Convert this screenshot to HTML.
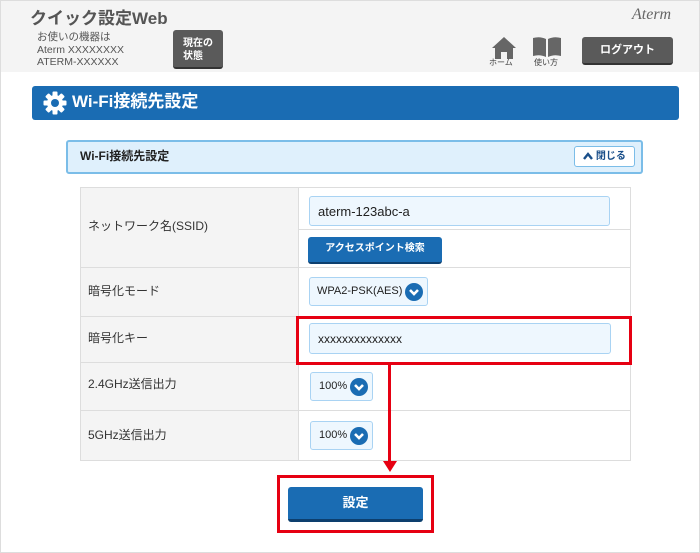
<!DOCTYPE html>
<html><head><meta charset="utf-8"><style>
*{box-sizing:border-box;margin:0;padding:0}
body{width:700px;height:553px;position:relative;background:#fff;font-family:"Liberation Sans","Noto Sans CJK JP",sans-serif;overflow:hidden;line-height:1}
.a{position:absolute}
.hdr{left:0;top:0;width:700px;height:72px;background:#f4f4f4}
.sel{position:absolute;background:#eef7fe;border:1px solid #a9d3f3;border-radius:3px;font-size:12px;color:#222;padding-left:8px;display:flex;align-items:center}
.chev{position:absolute;right:4px;top:50%;margin-top:-9px;width:18px;height:18px}
.lbl{position:absolute;left:88px;font-size:12px;color:#333}
.hl{position:absolute;left:80px;width:550px;height:1px;background:#ddd}
</style></head><body>
<div class="a hdr"></div>
<div class="a" style="left:0;top:0;width:700px;height:553px;border:1px solid #ddd;z-index:5"></div>
<div class="a" style="left:30px;top:10px;font-size:17px;font-weight:bold;color:#555">クイック設定Web</div>
<div class="a" style="left:37px;top:31px;font-size:10.5px;color:#555;line-height:12.5px">お使いの機器は<br>Aterm XXXXXXXX<br>ATERM-XXXXXX</div>
<div class="a" style="left:173px;top:30px;width:50px;height:39px;background:#5a5a5a;border-radius:3px;border-bottom:2px solid #333;color:#fff;font-size:10px;font-weight:bold;padding:7px 0 0 10px;line-height:13px">現在の<br>状態</div>
<div class="a" style="left:632px;top:7px;font-size:16px;font-style:italic;color:#666;font-family:'Liberation Serif',serif">Aterm</div>
<svg class="a" style="left:490px;top:36px" width="28" height="24" viewBox="0 0 28 24"><path d="M14 1 L2 12 H5 V23 H11 V16 H17 V23 H23 V12 H26 Z" fill="#666"/></svg>
<div class="a" style="left:489px;top:59px;font-size:8px;color:#444">ホーム</div>
<svg class="a" style="left:532px;top:36px" width="30" height="22" viewBox="0 0 30 22"><path d="M1 2 Q8 0 14 3 V21 Q8 18 1 20 Z M16 3 Q22 0 29 2 V20 Q22 18 16 21 Z" fill="#666"/></svg>
<div class="a" style="left:534px;top:59px;font-size:8px;color:#444">使い方</div>
<div class="a" style="left:582px;top:37px;width:91px;height:28px;background:#5a5a5a;border-radius:3px;border-bottom:2px solid #333;color:#fff;font-size:11px;font-weight:bold;text-align:center;line-height:26px">ログアウト</div>
<div class="a" style="left:32px;top:86px;width:647px;height:34px;background:#1a6cb3;border-radius:3px"></div>
<svg class="a" style="left:43px;top:91px" width="24" height="24" viewBox="0 0 24 24"><g fill="#fff"><circle cx="12" cy="12" r="8"/><g id="t"><rect x="9.5" y="0.5" width="5" height="23" rx="1"/></g><use href="#t" transform="rotate(45 12 12)"/><use href="#t" transform="rotate(90 12 12)"/><use href="#t" transform="rotate(135 12 12)"/></g><circle cx="12" cy="12" r="4" fill="#1a6cb3"/></svg>
<div class="a" style="left:72px;top:93px;font-size:17px;font-weight:bold;color:#fff">Wi-Fi接続先設定</div>
<div class="a" style="left:66px;top:140px;width:577px;height:34px;background:#dff0fc;border:2px solid #7bbde8;border-radius:3px"></div>
<div class="a" style="left:80px;top:150px;font-size:12px;font-weight:bold;color:#222">Wi-Fi接続先設定</div>
<div class="a" style="left:574px;top:146px;width:61px;height:21px;background:#fff;border:1px solid #7bbde8;border-radius:3px;font-size:10px;font-weight:bold;color:#1a4f8a;line-height:19px;text-align:center"><svg width="10" height="8" viewBox="0 0 10 8" style="vertical-align:-1px"><path d="M1 7 L5 2 L9 7" stroke="#1a4f8a" stroke-width="2.4" fill="none"/></svg> 閉じる</div>
<div class="a" style="left:80px;top:187px;width:551px;height:274px;border:1px solid #ddd;background:#fff"></div>
<div class="a" style="left:81px;top:188px;width:218px;height:272px;background:#f4f4f4;border-right:1px solid #ddd"></div>
<div class="hl" style="top:267px"></div><div class="hl" style="top:316px"></div><div class="hl" style="top:362px"></div><div class="hl" style="top:410px"></div>
<div class="a" style="left:299px;top:229px;width:331px;height:1px;background:#ddd"></div>
<div class="lbl" style="top:220px">ネットワーク名(SSID)</div>
<div class="lbl" style="top:285px">暗号化モード</div>
<div class="lbl" style="top:332px">暗号化キー</div>
<div class="lbl" style="top:378px">2.4GHz送信出力</div>
<div class="lbl" style="top:429px">5GHz送信出力</div>
<div class="sel" style="left:309px;top:196px;width:301px;height:30px;font-size:13px">aterm-123abc-a</div>
<div class="a" style="left:308px;top:237px;width:134px;height:27px;background:#1a6cb3;border-radius:3px;border-bottom:2px solid #0d3f6e;color:#fff;font-size:10px;font-weight:bold;text-align:center;line-height:24px">アクセスポイント検索</div>
<div class="sel" style="left:309px;top:277px;width:119px;height:29px;font-size:11px;padding-left:7px">WPA2-PSK(AES)<svg class="chev" viewBox="0 0 18 18"><circle cx="9" cy="9" r="9" fill="#1a6cb3"/><path d="M5 7 L9 11 L13 7" stroke="#fff" stroke-width="2.6" fill="none"/></svg></div>
<div class="sel" style="left:309px;top:323px;width:302px;height:31px">xxxxxxxxxxxxxx</div>
<div class="sel" style="left:310px;top:372px;width:63px;height:29px;font-size:11px">100%<svg class="chev" viewBox="0 0 18 18"><circle cx="9" cy="9" r="9" fill="#1a6cb3"/><path d="M5 7 L9 11 L13 7" stroke="#fff" stroke-width="2.6" fill="none"/></svg></div>
<div class="sel" style="left:310px;top:421px;width:63px;height:29px;font-size:11px">100%<svg class="chev" viewBox="0 0 18 18"><circle cx="9" cy="9" r="9" fill="#1a6cb3"/><path d="M5 7 L9 11 L13 7" stroke="#fff" stroke-width="2.6" fill="none"/></svg></div>
<div class="a" style="left:296px;top:316px;width:336px;height:49px;border:3px solid #e60012"></div>
<div class="a" style="left:388px;top:364px;width:3px;height:98px;background:#e60012"></div>
<div class="a" style="left:383px;top:461px;width:0;height:0;border-left:7px solid transparent;border-right:7px solid transparent;border-top:11px solid #e60012"></div>
<div class="a" style="left:277px;top:475px;width:157px;height:58px;border:3px solid #e60012"></div>
<div class="a" style="left:288px;top:487px;width:135px;height:35px;background:#1a6cb3;border-radius:3px;border-bottom:3px solid #0d3f6e;color:#fff;font-size:13px;font-weight:bold;text-align:center;line-height:32px">設定</div>
</body></html>
